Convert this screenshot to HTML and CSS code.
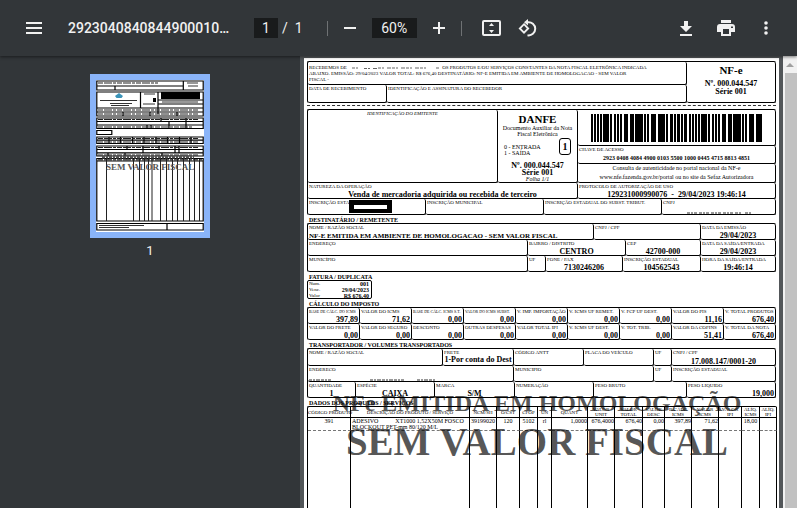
FILE: index.html
```html
<!DOCTYPE html>
<html lang="pt-BR">
<head>
<meta charset="utf-8">
<title>2923040840844900010…</title>
<link rel="stylesheet" href="styles.css">
</head>
<body>
<header class="toolbar">
  <button class="icon-btn menu" aria-label="Menu"><svg width="16" height="12" viewBox="0 0 16 12"><path d="M0 0h16v2H0zM0 5h16v2H0zM0 10h16v2H0z"/></svg></button>
  <span class="title">2923040840844900010…</span>
  <div class="pages"><input class="num page-input" aria-label="Página" value="1"><span>/</span><span class="total">1</span></div>
  <span class="divider"></span>
  <button class="icon-btn" aria-label="Reduzir"><svg width="12" height="12" viewBox="0 0 12 12"><path d="M0 5h12v2H0z"/></svg></button>
  <input class="num zoom-input" aria-label="Zoom" value="60%">
  <button class="icon-btn" aria-label="Ampliar"><svg width="12" height="12" viewBox="0 0 12 12"><path d="M5 0h2v5h5v2H7v5H5V7H0V5h5z"/></svg></button>
  <span class="divider"></span>
  <button class="icon-btn fit" aria-label="Ajustar à página"><svg width="19" height="16" viewBox="0 0 19 16"><rect x="1" y="1" width="17" height="14" rx="1" fill="none" stroke="#f1f1f1" stroke-width="2"/><path d="M9.500 3l2.500 3h-5zM9.500 13l2.500-3h-5z"/></svg></button>
  <button class="icon-btn rotate" aria-label="Girar"><svg width="19" height="18" viewBox="0 0 19 18"><path d="M6 5.200L10.200 9.500 6 13.700 1.800 9.500z" fill="none" stroke="#f1f1f1" stroke-width="1.800"/><path d="M9.500 3.300a6.600 6.600 0 1 1 0 13" fill="none" stroke="#f1f1f1" stroke-width="2"/><path d="M6 3.300L10 0v6.600z"/></svg></button>
  <div class="actions">
    <button class="icon-btn" aria-label="Baixar"><svg width="12" height="15" viewBox="0 0 12 15"><path d="M4 0h4v5h4l-6 6-6-6h4zM0 13h12v2H0z"/></svg></button>
    <button class="icon-btn" aria-label="Imprimir"><svg width="18" height="16" viewBox="0 0 18 16"><path fill-rule="evenodd" d="M4 0h10v3H4zM3 4h12a3 3 0 0 1 3 3v5h-4v4H4v-4H0V7a3 3 0 0 1 3-3zM6 9v5h6V9zM14 6.500v1.500h2V6.500z"/></svg></button>
    <button class="icon-btn" aria-label="Mais ações"><svg width="4" height="14" viewBox="0 0 4 14"><circle cx="2" cy="2" r="1.800"/><circle cx="2" cy="7" r="1.800"/><circle cx="2" cy="12" r="1.800"/></svg></button>
  </div>
</header>
<main class="main">
  <aside class="sidebar">
    <a class="thumb" href="#page" aria-label="Página 1">
      <svg width="108" height="152" viewBox="0 0 108 152">
        <path fill="#fff" d="M0 0h108v152H0z"/>
        <g fill="none" stroke="#000" stroke-width="1.200">
          <path d="M.8 1h106.400v9H.8zM.8 6h86.500M87.300 1v9M19 6v4M.8 12h106.400v24H.8zM44.500 12v16M62 12v22M62 20h45M62 24h45M.8 28h106M.8 32h106M27 32v4M54 32v4M81 32v4"/>
          <path d="M.8 38h106.400v10.500H.8zM.8 41.500h106M.8 45h106M65 38v3M90 38v10M73 41v4M51 45v3.500M55 45v3.500M73 45v3.500M.8 50.500h15v4H.8z"/>
          <path d="M.8 57h106.400v6.500H.8zM.8 60.200h106.400M13 57v6.500M24.500 57v6.500M36.500 57v6.500M48 57v6.500M60 57v6.500M71.500 57v6.500M83.500 57v6.500M95 57v6.500M.8 66h106.400v10H.8zM.8 69.500h106M.8 72.800h106M31 66v3M47 66v7M63 66v3M79 66v7M83 66v7M12 73v3M29 73v3M66 73v3"/>
          <path d="M.8 78.500h106.400V141H.8zM.8 81h106.400M.8 143.500h106.400v6.500H.8zM71 143.500v6.500"/>
        </g>
        <path fill="none" stroke="#222" stroke-width="1" d="M10.500 79v62M37.500 79v62M43.500 79v62M48.500 79v62M52.500 79v62M56 79v62M64.500 79v62M70.500 79v62M76.500 79v62M81.500 79v62M87.500 79v62M93.500 79v62M98.500 79v62M103.500 79v62"/>
        <path stroke="#222" stroke-width="1.200" stroke-dasharray="5 1 8 1 3 1" d="M2 3h60M2 30h100M2 34h100M2 39.500h100M2 47h95M2 58.500h100M2 62h100M2 67.500h100M2 75h100M2 79.800h104"/>
        <path stroke="#555" stroke-width="3" stroke-dasharray="3 1 2 1" d="M6 77h92"/>
        <path fill="#000" d="M65 12h39v7H65zM57 18h3v4h-3z"/>
        <path stroke="#333" stroke-width="1" d="M91 3h11M92 6h10M48 14h11M47 24h12M4 20.500h37M14 23.500h22M15 25.500h18M66 22h36M3 145.500h45M3 147.500h30"/>
        <path fill="#3a93b8" d="M19 16l4-3 4 3-1.500 2h-5z"/>
        <text class="thumb-mark" x="10" y="90">SEM VALOR FISCAL</text>
      </svg>
    </a>
    <span class="thumb-num">1</span>
  </aside>
  <section class="viewer">
    <article class="page" id="page">
      <div class="group slip">
        <div class="slip-left">
          <div class="cell receipt">RECEBEMOS DE <svg class="gap" width="94" height="4" viewBox="0 0 94 4"><path stroke="#666" fill="none" stroke-dasharray="3 1 2 3 4 1" d="M4 3h8M16 3.500h14M30 3h50M88 3h4"/></svg>OS PRODUTOS E/OU SERVIÇOS CONSTANTES DA NOTA FISCAL ELETRÔNICA INDICADA<br>ABAIXO. EMISSÃO: 29/04/2023 VALOR TOTAL: R$ 676,40 DESTINATÁRIO: NF-E EMITIDA EM AMBIENTE DE HOMOLOGACAO - SEM VALOR<br>FISCAL -</div>
          <div class="sign"><div class="cell"><small>DATA DE RECEBIMENTO</small></div><div class="cell"><small>IDENTIFICAÇÃO E ASSINATURA DO RECEBEDOR</small></div></div>
        </div>
        <div class="cell nfe"><h1>NF-e</h1><b>Nº. 000.044.547</b><b>Série 001</b></div>
      </div>
      <hr class="cut">
      <div class="group">
        <div class="row issuer">
          <div class="cell emit"><small>IDENTIFICAÇÃO DO EMITENTE</small></div>
          <div class="cell danfe">
            <h1>DANFE</h1><p>Documento Auxiliar da Nota<br>Fiscal Eletrônica</p>
            <div class="kind"><span>0 - ENTRADA<br>1 - SAÍDA</span><b class="kind-box">1</b></div>
            <b>Nº. 000.044.547</b><b>Série 001</b><i>Folha 1/1</i>
          </div>
          <div class="access">
            <div class="cell code"><svg class="barcode" viewBox="0 0 171 28" preserveAspectRatio="none"><path stroke="#000" stroke-width="28" stroke-dasharray="2 1 2 1 2 1 2 1 6 1 2 2 2 1 2 1 2 2 4 2 4 1 8 1 2 1 2 2 5 2 7 1 2 2 3 1 2 1 3 1 2 1 3 2" d="M0 14h171"/></svg></div>
            <div class="cell key"><small>CHAVE DE ACESSO</small><b>2923 0408 4084 4900 0103 5500 1000 0445 4715 8813 4851</b></div>
            <div class="cell consult">Consulta de autenticidade no portal nacional da NF-e<br>www.nfe.fazenda.gov.br/portal ou no site da Sefaz Autorizadora</div>
          </div>
        </div>
        <div class="row g-nat"><div class="cell mid"><small>NATUREZA DA OPERAÇÃO</small><b>Venda de mercadoria adquirida ou recebida de terceiro</b></div><div class="cell mid"><small>PROTOCOLO DE AUTORIZAÇÃO DE USO</small><b>129231000990076&nbsp; -&nbsp; 29/04/2023 19:46:14</b></div></div>
        <div class="row g-insc"><div class="cell"><small>INSCRIÇÃO ESTADUAL</small><span class="redact"></span></div><div class="cell"><small>INSCRIÇÃO MUNICIPAL</small></div><div class="cell"><small>INSCRIÇÃO ESTADUAL DO SUBST. TRIBUT.</small></div><div class="cell"><small>CNPJ</small><svg class="smudge cnpj" width="64" height="2" viewBox="0 0 64 2"><path stroke="#333" stroke-width="1" stroke-dasharray="3 1 2 1 3 2" d="M0 1h54M58 1h6"/></svg></div></div>
      </div>
      <h2>DESTINATÁRIO / REMETENTE</h2>
      <div class="group">
        <div class="row g-d1"><div class="cell"><small>NOME / RAZÃO SOCIAL</small><b class="name">NF-E EMITIDA EM AMBIENTE DE HOMOLOGACAO - SEM VALOR FISCAL</b></div><div class="cell"><small>CNPJ / CPF</small></div><div class="cell mid"><small>DATA DA EMISSÃO</small><b>29/04/2023</b></div></div>
        <div class="row g-d2"><div class="cell"><small>ENDEREÇO</small></div><div class="cell mid"><small>BAIRRO / DISTRITO</small><b>CENTRO</b></div><div class="cell mid"><small>CEP</small><b>42700-000</b></div><div class="cell mid"><small>DATA DA SAÍDA/ENTRADA</small><b>29/04/2023</b></div></div>
        <div class="row g-d3"><div class="cell"><small>MUNICÍPIO</small></div><div class="cell"><small>UF</small></div><div class="cell mid"><small>FONE / FAX</small><b>7130246206</b></div><div class="cell mid"><small>INSCRIÇÃO ESTADUAL</small><b>104562543</b></div><div class="cell mid"><small>HORA DA SAÍDA/ENTRADA</small><b>19:46:14</b></div></div>
      </div>
      <h2>FATURA / DUPLICATA</h2>
      <dl class="invoice"><div><dt>Num.</dt><dd>001</dd></div><div><dt>Venc.</dt><dd>29/04/2023</dd></div><div><dt>Valor</dt><dd>R$ 676,40</dd></div></dl>
      <h2>CÁLCULO DO IMPOSTO</h2>
      <div class="group">
        <div class="row g-tax"><div class="cell end"><small class="tiny">BASE DE CÁLC. DO ICMS</small><b>397,89</b></div><div class="cell end"><small>VALOR DO ICMS</small><b>71,62</b></div><div class="cell end"><small class="tiny">BASE DE CÁLC. ICMS S.T.</small><b>0,00</b></div><div class="cell end"><small class="tiny">VALOR DO ICMS SUBST.</small><b>0,00</b></div><div class="cell end"><small>V. IMP. IMPORTAÇÃO</small><b>0,00</b></div><div class="cell end"><small>V. ICMS UF REMET.</small><b>0,00</b></div><div class="cell end"><small>V. FCP UF DEST.</small><b>0,00</b></div><div class="cell end"><small>VALOR DO PIS</small><b>11,16</b></div><div class="cell end"><small>V. TOTAL PRODUTOS</small><b>676,40</b></div></div>
        <div class="row g-tax"><div class="cell end"><small>VALOR DO FRETE</small><b>0,00</b></div><div class="cell end"><small>VALOR DO SEGURO</small><b>0,00</b></div><div class="cell end"><small>DESCONTO</small><b>0,00</b></div><div class="cell end"><small>OUTRAS DESPESAS</small><b>0,00</b></div><div class="cell end"><small>VALOR TOTAL IPI</small><b>0,00</b></div><div class="cell end"><small>V. ICMS UF DEST.</small><b>0,00</b></div><div class="cell end"><small>V. TOT. TRIB.</small><b>0,00</b></div><div class="cell end"><small>VALOR DA COFINS</small><b>51,41</b></div><div class="cell end"><small>V. TOTAL DA NOTA</small><b>676,40</b></div></div>
      </div>
      <h2>TRANSPORTADOR / VOLUMES TRANSPORTADOS</h2>
      <div class="group">
        <div class="row g-t1"><div class="cell"><small>NOME / RAZÃO SOCIAL</small></div><div class="cell freight"><small>FRETE</small><b>1-Por conta do Dest</b></div><div class="cell"><small>CÓDIGO ANTT</small></div><div class="cell"><small>PLACA DO VEÍCULO</small></div><div class="cell"><small>UF</small></div><div class="cell mid"><small>CNPJ / CPF</small><b>17.008.147/0001-20</b></div></div>
        <div class="row g-t2"><div class="cell"><small>ENDERECO</small><svg class="smudge" width="134" height="2" viewBox="0 0 134 2"><path stroke="#333" stroke-width="1" stroke-dasharray="3 1 2 1 4 1" d="M0 1h22M61 1h34M108 1h18"/></svg></div><div class="cell"><small>MUNICIPIO</small></div><div class="cell"><small>UF</small></div><div class="cell"><small>INSCRIÇÃO ESTADUAL</small></div></div>
        <div class="row g-t3"><div class="cell mid"><small>QUANTIDADE</small><b>1</b></div><div class="cell mid"><small>ESPÉCIE</small><b>CAIXA</b></div><div class="cell mid"><small>MARCA</small><b>S/M</b></div><div class="cell"><small>NUMERAÇÃO</small></div><div class="cell"><small>PESO BRUTO</small></div><div class="cell end"><small>PESO LIQUIDO</small><b>19,000</b></div></div>
      </div>
      <h2>DADOS DOS PRODUTOS / SERVIÇOS</h2>
      <div class="products">
        <table>
          <colgroup><col class="w43"><col class="w119"><col class="w27"><col class="w23"><col class="w18"><col class="w14"><col class="w36"><col class="w27"><col class="w28"><col class="w22"><col class="w27"><col class="w27"><col class="w23"><col class="w18"><col class="w17"></colgroup>
          <thead><tr><th>CÓDIGO PRODUTO</th><th>DESCRIÇÃO DO PRODUTO / SERVIÇO</th><th>NCM/SH</th><th>O/CST</th><th>CFOP</th><th>UN</th><th>QUANT</th><th>VALOR<br>UNIT</th><th>VALOR<br>TOTAL</th><th>VALOR<br>DESC</th><th>B.CÁLC<br>ICMS</th><th>VALOR<br>ICMS</th><th>VALOR<br>IPI</th><th>ALÍQ.<br>ICMS</th><th>ALÍQ.<br>IPI</th></tr></thead>
          <tbody>
            <tr class="item"><td>391</td><td class="desc"><span>ADESIVO</span><span>XT1000 1,52X50M FOSCO</span><br>BLOCKOUT PET-mm 80/120 M/L</td><td>39199020</td><td>120</td><td>5102</td><td>rl</td><td class="n">1,0000</td><td class="n">676,4000</td><td class="n">676,40</td><td class="n">0,00</td><td class="n">397,89</td><td class="n">71,62</td><td></td><td>18,00</td><td></td></tr>
            <tr class="blank"><td></td><td></td><td></td><td></td><td></td><td></td><td></td><td></td><td></td><td></td><td></td><td></td><td></td><td></td><td></td></tr>
          </tbody>
        </table>
        <div class="watermark"><span class="wm-small">NFe EMITIDA EM HOMOLOGAÇÃO</span><span class="wm-big">SEM VALOR FISCAL</span></div>
      </div>
    </article>
    <div class="scrollbar"><span class="arrow"></span><span class="track"></span></div>
  </section>
</main>
</body>
</html>
```
FILE: styles.css
```css
* { box-sizing: border-box; }
body { margin: 0; height: 100vh; overflow: hidden; display: flex; flex-direction: column; background: #323639; color: #f1f1f1; font-family: Roboto, sans-serif; font-size: 14px; }
h1, h2, p, dl, dd { margin: 0; }

/* Toolbar */
.toolbar { flex: none; height: 56px; display: flex; align-items: center; padding: 0 29px 0 26px; background: #323639; box-shadow: 0 1px 3px rgba(0, 0, 0, .5); position: relative; z-index: 1; }
.icon-btn { border: 0; padding: 0; background: none; display: flex; }
.icon-btn svg { fill: #f1f1f1; }
.title { margin: 0 26px; font-weight: 500; white-space: nowrap; width: 160px; }
.pages { display: flex; align-items: center; gap: 4px; }
.total { margin-left: 3px; }
.num { border: 0; padding: 0; height: 20px; background: #191b1c; color: #f1f1f1; font: 14px Roboto, sans-serif; text-align: center; }
.page-input { width: 24px; }
.zoom-input { width: 45px; margin: 0 16px; }
.divider { width: 1px; height: 15px; background: #6f7274; margin: 0 16px 0 24px; }
.zoom-input + .icon-btn + .divider { margin: 0 20px 0 16px; }
.rotate { margin-left: 17px; }
.actions { margin-left: auto; display: flex; align-items: center; gap: 25px; }
.actions .icon-btn:last-child { margin-left: 4px; }

/* Thumbnails */
.main { flex: 1; min-height: 0; display: flex; }
.sidebar { flex: none; width: 300px; padding-top: 18px; display: flex; flex-direction: column; align-items: center; }
.thumb { display: block; padding: 6px; background: #8ab4f8; }
.thumb svg { display: block; }
.thumb-mark { font: bold 9px "Liberation Serif", serif; fill: #555; }
.thumb-num { margin-top: 5px; font-size: 13px; line-height: 16px; }

/* Document */
.viewer { flex: 1; min-width: 0; display: flex; gap: 4px; padding-left: 4px; background: #525659; overflow: hidden; }
.page { flex: 1; min-width: 0; height: 900px; margin-top: 2px; padding: 3px 3px 0; background: #fff; color: #000; font: 8px/8px "Liberation Serif", serif; }
.group { border: 1px solid #000; border-width: 1px 0 0 1px; border-radius: 2px; }
.row { display: grid; }
.cell { min-width: 0; min-height: 16px; border: 1px solid #000; border-width: 0 1px 1px 0; border-radius: 2px; padding: 1px 1px 0; display: flex; flex-direction: column; justify-content: space-between; white-space: nowrap; position: relative; }
.cell small { font-size: 5px; line-height: 5px; }
.cell .tiny { font-size: 4px; }
.mid b, .freight b { text-align: center; }
.end b { text-align: right; }
.mid b, .end b, .name { margin-bottom: -1px; }
.name { font-size: 7px; }
h2 { font-size: 6px; line-height: 6px; padding: 2px 0 0 2px; }

.slip { display: grid; grid-template-columns: 379fr 89fr; }
.slip-left { min-width: 0; }
.cell.receipt { display: block; height: 23px; padding-top: 3px; font-size: 5px; line-height: 6px; }
.sign { display: grid; grid-template-columns: 79fr 300fr; }
.sign .cell { height: 18px; }
.cell.nfe { align-items: center; justify-content: flex-start; }
.nfe h1 { font-size: 11px; line-height: 14px; margin-bottom: 3px; }
.cut { margin: 2px 0 3px; border: 0; border-top: 1px dashed #333; }

.issuer { height: 73px; grid-template-columns: 190fr 80fr 198fr; }
.emit { text-align: center; font-style: italic; }
.cell.danfe { align-items: center; justify-content: flex-start; padding-top: 3px; line-height: 7px; }
.danfe h1 { font-size: 11px; line-height: 12px; }
.danfe p { font-size: 6px; line-height: 6px; text-align: center; }
.danfe i { font-size: 6px; line-height: 6px; }
.kind { align-self: stretch; display: flex; justify-content: space-between; padding: 0 5px; margin: 1px 0 6px; height: 18px; align-items: flex-end; font-size: 6px; line-height: 6px; }
.kind-box { width: 12px; height: 17px; border: 1px solid #000; border-radius: 3px; font-size: 10px; line-height: 15px; text-align: center; align-self: flex-start; }
.access { min-width: 0; display: grid; grid-template-rows: 36px 18px 19px; }
.cell.code { padding: 4px 13px 0; justify-content: flex-start; }
.barcode { width: 100%; height: 28px; }
.key b { font-size: 6px; text-align: center; line-height: 10px; }
.cell.consult { display: block; padding: 0; font-size: 6px; text-align: center; line-height: 9px; }
.redact { position: absolute; left: 41px; top: 1px; width: 43px; height: 13px; border: 5px solid #000; border-width: 5px 5px 4px; background: #fff; }
.smudge { display: block; }
.cnpj { align-self: center; }

.g-nat { grid-template-columns: 270fr 198fr; }
.g-insc { grid-template-columns: 118fr 118fr 118fr 114fr; }
.g-d1 { grid-template-columns: 286fr 107fr 75fr; }
.g-d2 { grid-template-columns: 220fr 98fr 75fr 75fr; }
.g-d3 { grid-template-columns: 220fr 18fr 77fr 78fr 75fr; }
.g-tax { grid-template-columns: repeat(9, 1fr); }
.g-t1 { grid-template-columns: 135fr 71fr 70fr 70fr 18fr 104fr; }
.g-t2 { grid-template-columns: 206fr 140fr 18fr 104fr; }
.g-t3 { grid-template-columns: 48fr 79fr 80fr 79fr 93fr 89fr; }
.freight b { line-height: 10px; }

.invoice { width: 65px; height: 19px; border: 1px solid #000; border-radius: 2px; padding: 0 2px 0 1px; font-size: 6px; line-height: 6px; }
.invoice div { display: flex; justify-content: space-between; height: 6px; }
.invoice dt { font-size: 5px; }
.invoice dd { font-weight: bold; }

/* Products */
.products { position: relative; }
table { width: 100%; table-layout: fixed; border-spacing: 0; border: 1px solid #000; border-width: 1px 0 0 1px; border-radius: 2px; font-size: 5px; line-height: 5px; }
th, td { padding: 0; border-right: 1px solid #000; text-align: center; white-space: nowrap; font-weight: normal; }
th { height: 11px; border-bottom: 1px solid #000; }
td { vertical-align: top; }
.item td { height: 13px; font-size: 6px; line-height: 6px; border-bottom: 1px dashed #777; }
.item .desc { text-align: left; padding-left: 1px; }
.desc span + span { margin-left: 17px; }
.item .n { text-align: right; }
.blank td { height: 400px; }
.w43 { width: 43px; } .w119 { width: 119px; } .w27 { width: 27px; } .w23 { width: 23px; } .w18 { width: 18px; }
.w14 { width: 14px; } .w36 { width: 36px; } .w28 { width: 28px; } .w22 { width: 22px; } .w17 { width: 17px; }
.watermark { position: absolute; left: 0; right: 9px; top: -19px; display: flex; flex-direction: column; align-items: center; color: rgba(0, 0, 0, .66); font-weight: bold; white-space: nowrap; }
.wm-small { font-size: 24px; line-height: 32px; }
.wm-big { font-size: 39px; line-height: 46px; }

/* Scrollbar */
.scrollbar { flex: none; width: 14px; display: flex; flex-direction: column; background: #f1f1f1; }
.arrow { height: 17px; display: flex; justify-content: center; align-items: center; }
.arrow::before { content: ""; border: 4px solid transparent; border-top: 0; border-bottom-color: #a0a0a0; }
.track { flex: 1; margin-left: 2px; background: #c1c1c1; }
```
